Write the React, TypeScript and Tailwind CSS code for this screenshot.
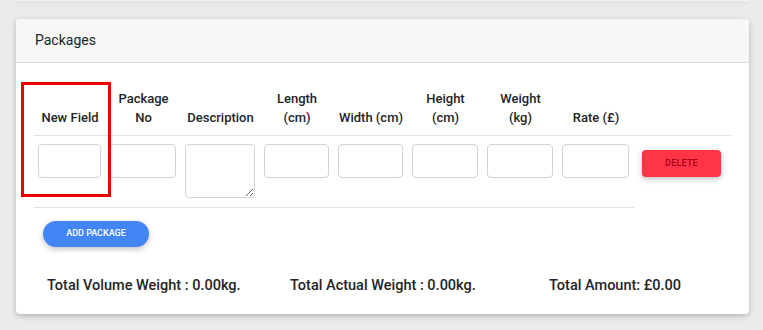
const columns = [
  { label: ["New", "Field"], one: true, w: "w-[72px]" },
  { label: ["Package", "No"], w: "w-[75px]" },
  { label: ["Description"], w: "w-[79px]", area: true },
  { label: ["Length", "(cm)"], w: "w-[74px]" },
  { label: ["Width (cm)"], w: "w-[74px]" },
  { label: ["Height", "(cm)"], w: "w-[75px]" },
  { label: ["Weight", "(kg)"], w: "w-[75px]" },
  { label: ["Rate (£)"], w: "w-[76px]" },
];

export default function App() {
  return (
    <div className="min-h-screen w-full bg-[#ebebeb] pl-4 pr-[14px] font-[Roboto,sans-serif] text-[#212529]">
      {/* previous card, only its bottom edge shows */}
      <div className="h-[1px] bg-[#f3f3f3] rounded-b shadow-[0_2px_4px_rgba(0,0,0,0.14)]" />

      <div className="mt-[18px] bg-white rounded-[4px] shadow-[0_2px_5px_rgba(0,0,0,0.16),0_2px_10px_rgba(0,0,0,0.08)]">
        <div className="h-[44px] flex items-center pl-[19px] bg-[#f7f7f7] border-b border-[#dcdcdc] rounded-t-[4px] text-[14px]">
          Packages
        </div>

        <div className="px-[18px] pt-[17px] pb-[18px]">
          <div className="relative">
            {/* header */}
            <div className="flex h-[56px] border-b border-[#dee2e6]">
              {columns.map((c, i) => (
                <div
                  key={i}
                  className={`${c.w} flex items-end justify-center pb-[8px] text-center text-[13px] leading-[19px] font-medium`}
                >
                  <div>
                    {c.one ? c.label.join(" ") : c.label.map((l, j) => <div key={j}>{l}</div>)}
                  </div>
                </div>
              ))}
              <div className="w-[97px]" />
            </div>

            {/* row */}
            <div className="flex">
              {columns.map((c, i) => (
                <div key={i} className={`${c.w} pl-1 pr-[5px] pt-2 pb-[9px] border-b border-[#dee2e6]`}>
                  {c.area ? (
                    <textarea className="block w-full h-[54px] border border-[#ced4da] rounded-[4px] bg-white" />
                  ) : (
                    <input className="block w-full h-[34px] border border-[#ced4da] rounded-[4px] bg-white" />
                  )}
                </div>
              ))}
              <div className="w-[97px] pl-[8px] pt-[13px]">
                <button className="w-[79px] h-[27px] rounded-[4px] bg-[#ff3547] text-[#a3001a] text-[9px] font-medium tracking-[0.2px] shadow-[0_2px_5px_rgba(0,0,0,0.16),0_2px_8px_rgba(0,0,0,0.1)]">
                  DELETE
                </button>
              </div>
            </div>

            {/* highlight box */}
            <div className="absolute left-[-13px] top-[2px] w-[90px] h-[115px] border-[3px] border-[#ee0000]" />
          </div>

          <button className="mt-[13px] ml-[9px] w-[106px] h-[26px] rounded-full bg-[#4285f4] text-white text-[9px] font-medium shadow-[0_2px_5px_rgba(0,0,0,0.16),0_2px_8px_rgba(0,0,0,0.1)]">
            ADD PACKAGE
          </button>

          <div className="mt-[29px] flex pl-[13px] text-[14.5px] leading-[20px] font-medium">
            <div className="w-[243px]">Total Volume Weight : 0.00kg.</div>
            <div className="w-[259px]">Total Actual Weight : 0.00kg.</div>
            <div>Total Amount: £0.00</div>
          </div>
        </div>
      </div>
    </div>
  );
}
